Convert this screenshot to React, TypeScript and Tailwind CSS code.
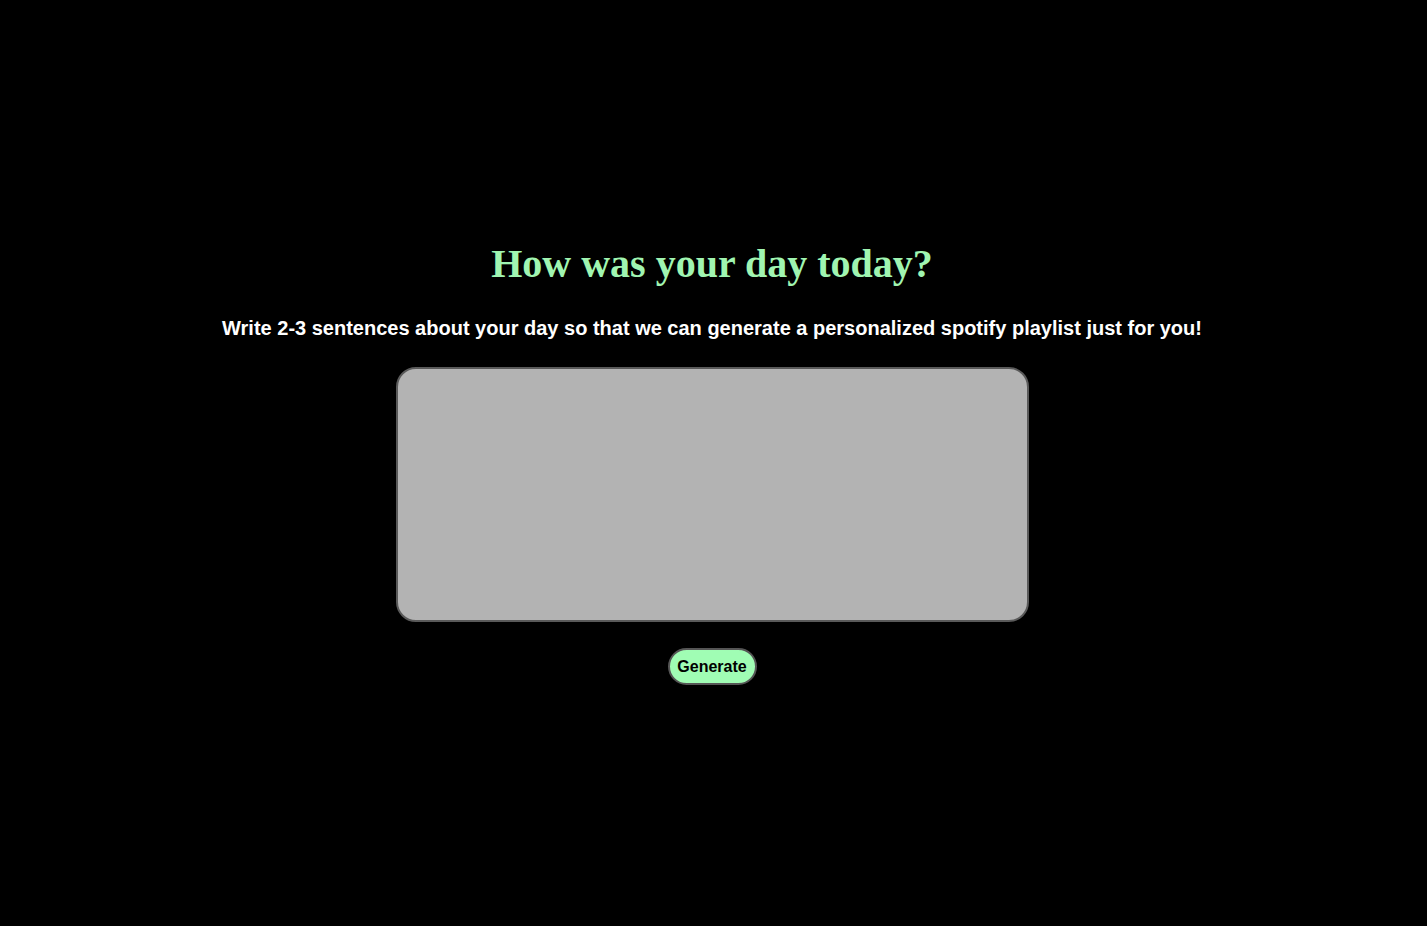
import React from "react";

export default function App() {
  return (
    <div className="min-h-screen w-full bg-black flex flex-col items-center justify-center pr-[3px] font-['Liberation_Sans',Arial,sans-serif]">
      <h1 className="text-[40px] font-bold leading-[46px] text-[#a0f5b1] font-['Liberation_Serif','Times_New_Roman',serif]">
        How was your day today?
      </h1>
      <p className="mt-[30px] text-[20px] font-bold leading-[23px] text-white">
        Write 2-3 sentences about your day so that we can generate a personalized spotify playlist just for you!
      </p>
      <textarea className="mt-[27px] box-border w-[633px] h-[255px] resize-none rounded-[20px] border-2 border-[#5a5a5a] bg-[#b3b3b3] outline-none p-2" />
      <button className="mt-[26px] box-border h-[37px] w-[89px] rounded-full border-2 border-[#555555] bg-[#a0fdb4] text-[16px] font-bold text-black">
        Generate
      </button>
    </div>
  );
}
